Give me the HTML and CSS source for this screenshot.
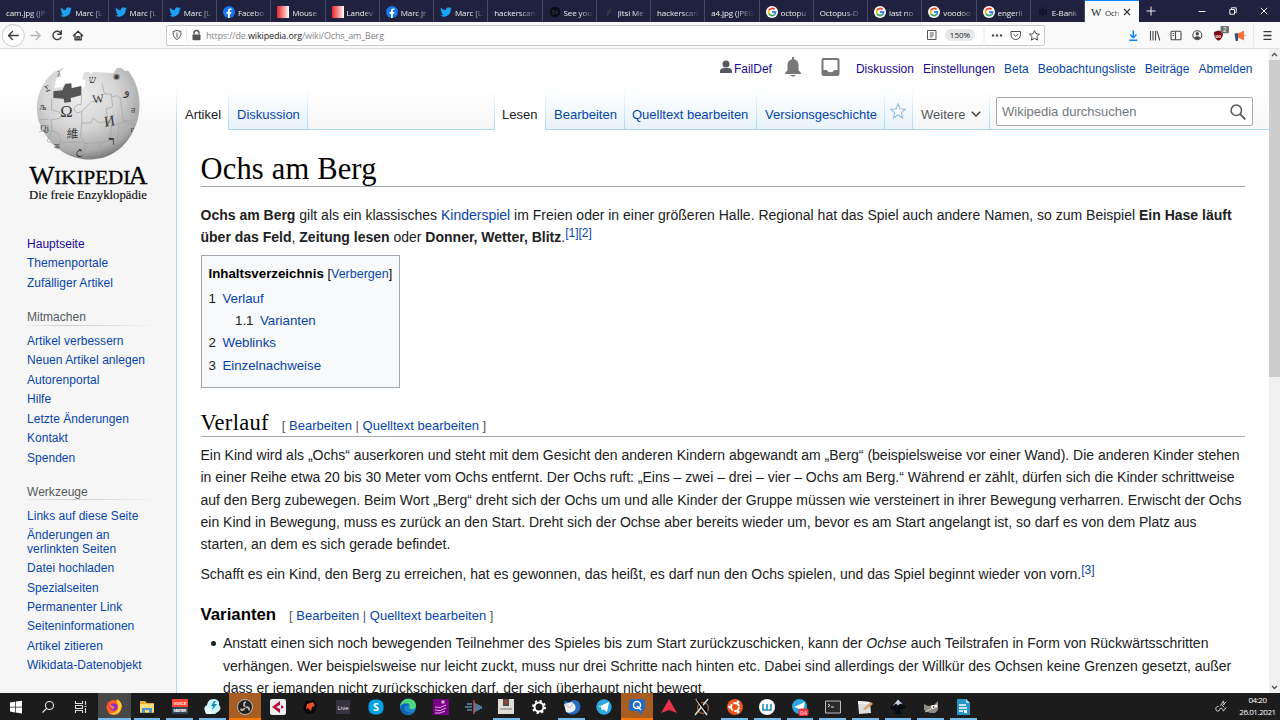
FILE: index.html
```html
<!DOCTYPE html>
<html lang="de">
<head>
<meta charset="utf-8">
<title>Ochs am Berg – Wikipedia</title>
<link rel="stylesheet" href="styles.css">
</head>
<body>
<svg class="defs" width="0" height="0">
  <symbol id="tw" viewBox="0 0 24 24"><path fill="#1da1f2" d="M23.6 4.9c-.8.4-1.7.6-2.7.8 1-.6 1.700-1.500 2-2.600-.9.5-1.900.9-3 1.100a4.700 4.700 0 0 0-8 4.300C8 8.300 4.500 6.400 2.200 3.500a4.700 4.700 0 0 0 1.400 6.300c-.8 0-1.500-.2-2.100-.6 0 2.300 1.600 4.200 3.700 4.700-.7.200-1.400.2-2.100.1.600 1.800 2.300 3.200 4.400 3.200A9.400 9.400 0 0 1 .6 19.100 13.200 13.200 0 0 0 21.200 7.400c.9-.7 1.700-1.500 2.400-2.500z"/></symbol>
  <symbol id="fb" viewBox="0 0 24 24"><circle cx="12" cy="12" r="12" fill="#1778f2"/><path fill="#fff" d="M10 24v-8.500H7V12h3V9.400C10 6.400 11.700 5 14.500 5l2.400.2v3h-1.500c-1.500 0-1.900.8-1.900 1.700V12h3.300l-.5 3.500h-2.800V24z"/></symbol>
  <symbol id="gg" viewBox="0 0 24 24"><circle cx="12" cy="12" r="12" fill="#fff"/><g fill="none" stroke-width="3.600"><path stroke="#ea4335" d="M5.800 8.800A7 7 0 0 1 17 7"/><path stroke="#fbbc05" d="M5.800 8.800a7.500 7.500 0 0 0 0 6.400"/><path stroke="#34a853" d="M5.800 15.200A7 7 0 0 0 16.500 17.500"/><path stroke="#4285f4" d="M16.500 17.500A7 7 0 0 0 19 12h-7"/></g></symbol>
  <symbol id="rd" viewBox="0 0 12 12"><linearGradient id="rg"><stop offset="0" stop-color="#e8232d"/><stop offset=".6" stop-color="#f6a09c"/><stop offset="1" stop-color="#fff"/></linearGradient><path fill="url(#rg)" d="M0 0h12v12H0z"/></symbol>
</svg>
<div class="screen">
<div class="tabstrip">
  <div class="tab"><span>cam.jpg (JP</span></div>
  <div class="tab"><svg><use href="#tw"/></svg><span>Marc [L</span></div>
  <div class="tab"><svg><use href="#tw"/></svg><span>Marc [L</span></div>
  <div class="tab"><svg><use href="#tw"/></svg><span>Marc [L</span></div>
  <div class="tab"><svg><use href="#fb"/></svg><span>Facebo</span></div>
  <div class="tab"><svg><use href="#rd"/></svg><span>Mouse</span></div>
  <div class="tab"><svg><use href="#rd"/></svg><span>Landev</span></div>
  <div class="tab"><svg><use href="#fb"/></svg><span>Marc Jr</span></div>
  <div class="tab"><svg><use href="#tw"/></svg><span>Marc [L</span></div>
  <div class="tab"><span>hackerscan</span></div>
  <div class="tab"><svg viewBox="0 0 12 12"><circle cx="6" cy="6" r="5.300" fill="#090d18"/><path d="M4 9V4l4 4V4" stroke="#30344b" fill="none"/></svg><span>See you</span></div>
  <div class="tab"><svg viewBox="0 0 12 12"><path d="M8 2c1 3-1 5-4 8L4 6z" fill="#303c42"/></svg><span>Jitsi Me</span></div>
  <div class="tab"><span>hackerscan</span></div>
  <div class="tab"><span>a4.jpg (JPEG</span></div>
  <div class="tab"><svg><use href="#gg"/></svg><span>octopu</span></div>
  <div class="tab"><span>Octopus-D</span></div>
  <div class="tab"><svg><use href="#gg"/></svg><span>last no</span></div>
  <div class="tab"><svg><use href="#gg"/></svg><span>voodoo</span></div>
  <div class="tab"><svg><use href="#gg"/></svg><span>engerli</span></div>
  <div class="tab"><svg viewBox="0 0 12 12"><path d="M6 1v10M3 3v6M9 3v6M2 5h8M2 8h8" stroke="#10152a" stroke-width="1.600"/></svg><span>E-Bank</span></div>
  <div class="tab active"><b>W</b><span>Och</span><svg class="x" viewBox="0 0 8 8"><path d="M1 1l6 6M7 1L1 7"/></svg></div>
  <svg class="plus" viewBox="0 0 10 10"><path d="M5 .5v9M.5 5h9"/></svg>
  <div class="winbtns">
    <svg viewBox="0 0 8 8"><path d="M.5 4.500h7"/></svg>
    <svg viewBox="0 0 8 8"><path d="M.8 2.500h4.700v4.700H.8zM2.500 2.500V.8h4.700v4.700H5.500"/></svg>
    <svg viewBox="0 0 8 8"><path d="M.8.8l6.400 6.400M7.200.8L.8 7.200"/></svg>
  </div>
</div>
<div class="toolbar">
  <svg class="nav" viewBox="0 0 90 27"><circle cx="13.300" cy="13.500" r="11" fill="#fff" stroke="#bbb" stroke-width=".8"/><g fill="none" stroke="#3b3b3f" stroke-width="1.400" stroke-linecap="round" stroke-linejoin="round"><path d="M18.200 13.500H8.500m4-4l-4 4 4 4"/><path stroke="#b5b5b8" d="M31 13.500h9m-3.800-4l4 4-4 4"/><path d="M60.800 11.200A4.200 4.200 0 1 0 61 15.200M61.300 8.800v3.400h-3.400"/><path d="M73.500 13.800l4.600-4.500 4.600 4.500M75 13.200v4.600h6.200v-4.600M77 17.600v-2.800h2.200v2.800"/></g></svg>
  <div class="urlbar">
    <svg class="lock" viewBox="0 0 36 19"><path d="M6 5.500l4-1 4 1c0 4-1 6.500-4 8-3-1.500-4-4-4-8zM10 6.500v5" fill="none" stroke="#55555a"/><path d="M19.500 1.500v16" stroke="#ddd" stroke-width=".6"/><rect x="25.500" y="8.500" width="8" height="5.800" rx=".8" fill="#55555a"/><path d="M27 8.500V7a2.500 2.500 0 0 1 5 0v1.500" fill="none" stroke="#55555a" stroke-width="1.300"/></svg>
    <span class="url">https://de.<b>wikipedia.org</b>/wiki/Ochs_am_Berg</span>
    <svg class="reader" viewBox="0 0 12 12"><path d="M1.500 1.500h8.500v9H1.500zM3.800 4h4M3.800 6h4M3.800 8h2.700" fill="none" stroke="#55555a"/></svg>
    <span class="zoom">150%</span>
    <svg class="acts" viewBox="0 0 60 19"><path d="M2 2v15" stroke="#ddd" stroke-width=".7"/><g fill="#4a4a4f"><circle cx="11" cy="9.500" r="1.200"/><circle cx="15" cy="9.500" r="1.200"/><circle cx="19" cy="9.500" r="1.200"/></g><g fill="none" stroke="#4a4a4f" stroke-linejoin="round"><path d="M29 5.500h9.500v3.300a4.750 4.750 0 0 1-9.500 0zM31.300 8l2.450 2.300L36.200 8"/><path d="M52.500 4.600l1.500 3.200 3.500.4-2.600 2.400.7 3.500-3.100-1.700-3.100 1.700.7-3.500-2.600-2.400 3.500-.4z"/></g></svg>
  </div>
  <svg class="ext" viewBox="1120 22 160 27"><g fill="none" stroke="#4a4a4f" stroke-width="1.100"><path stroke="#0a84ff" stroke-width="1.500" d="M1133.300 30.500v7m-3.200-3l3.200 3.200 3.200-3.200M1129.300 40.200h8"/><path d="M1150.500 31v9.500M1153 31v9.500M1155.500 31v9.500M1157 31l2.800 9.500"/><rect x="1171" y="31.300" width="10" height="8.500" rx="1"/><path d="M1175.500 31.300v8.500M1172.600 33.500h1.500M1172.600 35.500h1.500"/><circle cx="1197.300" cy="35.300" r="4.500"/></g><circle cx="1197.300" cy="33.700" r="1.700" fill="#4a4a4f"/><path d="M1194 38c1.500-2.300 5-2.300 6.600 0-1.600 1.800-5 1.800-6.600 0" fill="#4a4a4f"/><path d="M1214 32l4.500-1.500L1223 32c0 4-1 6.800-4.500 8.800-3.500-2-4.500-4.800-4.500-8.800" fill="#800610"/><text x="1215.500" y="37.500" font-size="4.500" font-weight="bold" fill="#fff">uo</text><rect x="1220.500" y="26" width="8.500" height="7.200" rx="1" fill="#707070"/><text x="1223" y="32" font-size="6.500" fill="#fff">2</text><path d="M1234.500 33.500l4-.5v4.500l-.8 3.500h-2z" fill="#345374"/><path d="M1238 33.500l6-3v10l-6-3z" fill="#ff7139"/><path d="M1244 35.500h2" stroke="#ff9a6d"/><path d="M1253.500 23v24" stroke="#e3e3e3" stroke-width=".7"/><path d="M1263.500 31.700h8M1263.500 35.500h8M1263.500 39.300h8" stroke="#38383d" stroke-width="1.300"/></svg>
</div>
<div class="viewport">
<div class="sidebar">
  <svg class="logo" viewBox="0 0 528 480">
    <defs><radialGradient id="globe" cx=".42" cy=".3" r=".72"><stop offset="0" stop-color="#eeeeee"/><stop offset=".5" stop-color="#d5d5d5"/><stop offset=".85" stop-color="#a9a9a9"/><stop offset="1" stop-color="#777"/></radialGradient></defs>
    <g transform="translate(-5 0)">
    <path fill="url(#globe)" d="M197 55c-11 10-19 22-24 36l-6 24 26-5 7-11 17 3-1 13 44-4 1-19-9-4 4-19 14-5 7 7 8-5 60 3 11-15 13-1 11 10 10-1 10 15C438 140 430 225 379 282c-50 56-134 60-191 20C112 247 94 160 143 91c12-18 36-35 54-36z"/>
    <path fill="#555" d="M165 124l27-3 9-19 18-2 1 14 29-6v28l-32 8 1 12-20 2-2-12-31-2z"/>
    <g fill="none" stroke="#a0a0a0" stroke-width="2"><path d="M160 145v35l18 5c16 5 13 22-2 22l-18 2 3 33 18 8 8 18-5 17M250 134l-2 30c-18-4-28 16-12 25l14-4 1 35 27-2 7-14 15 14 30-4 19 10 26-8 30 6M250 220l-3 40 13 21-1 30M311 100l7 31 21 2 4 37-20 7 7 43M340 220l-5 50-26 7-7 41M118 210l33-3M122 245l39-3M161 242l-15 31 42 18M187 277h65M260 280l49-2M387 138l-20 7-10-8-15 3M366 145l9 68 29-3M362 218l-4 61M250 185l30-30 30-3"/></g>
    <g fill="#383838" font-family="Liberation Serif, serif" text-anchor="middle"><text x="204" y="200" font-size="50">Ω</text><text x="300" y="159" font-size="37" transform="rotate(-6 300 150)">W</text><text x="334" y="228" font-size="45" transform="rotate(-8 334 220)">И</text><text x="223" y="265" font-size="35" font-family="Noto Sans CJK TC, sans-serif">維</text><text x="340" y="284" font-size="38" font-weight="bold">ר</text><text x="387" y="136" font-size="35">و</text><text x="354" y="86" font-size="24">◉</text><text x="282" y="99" font-size="31">ש</text><text x="147" y="124" font-size="26" transform="rotate(-20 147 115)">Σ</text><text x="134" y="181" font-size="28">љ</text><text x="139" y="244" font-size="26">Qj</text><text x="244" y="313" font-size="27">උ</text><text x="404" y="190" font-size="23">त</text><text x="182" y="80" font-size="22">λ</text><text x="175" y="297" font-size="22">क</text><text x="402" y="246" font-size="25">г</text></g>
    </g>
    <g font-family="Liberation Serif, serif" fill="#000" stroke="#000" stroke-width=".8"><text x="88" y="401" font-size="73" textLength="76" lengthAdjust="spacingAndGlyphs">W</text><text x="163" y="401" font-size="55" textLength="228" lengthAdjust="spacingAndGlyphs">IKIPEDI</text><text x="386" y="401" font-size="73" textLength="56" lengthAdjust="spacingAndGlyphs">A</text></g><text x="87" y="447" font-family="Liberation Serif, serif" font-size="38" fill="#111" stroke="#111" stroke-width=".5" textLength="354" lengthAdjust="spacingAndGlyphs">Die freie Enzyklopädie</text>
  </svg>
  <nav class="portal first"><a class="seen">Hauptseite</a><a>Themenportale</a><a>Zufälliger Artikel</a></nav>
  <nav class="portal"><h3>Mitmachen</h3><a>Artikel verbessern</a><a>Neuen Artikel anlegen</a><a>Autorenportal</a><a>Hilfe</a><a>Letzte Änderungen</a><a>Kontakt</a><a>Spenden</a></nav>
  <nav class="portal"><h3>Werkzeuge</h3><a>Links auf diese Seite</a><a>Änderungen an<br>verlinkten Seiten</a><a>Datei hochladen</a><a>Spezialseiten</a><a>Permanenter Link</a><a>Seiteninformationen</a><a>Artikel zitieren</a><a>Wikidata-Datenobjekt</a></nav>
</div>
<div class="main">
  <div class="head">
    <div class="personal">
      <svg class="user" viewBox="0 0 12 14"><circle cx="6" cy="4" r="3.500" fill="#54595d"/><path d="M0 13V11c0-2 2-3 4-3h4c2 0 4 1 4 3v2z" fill="#54595d"/></svg><a class="seen">FailDef</a>
      <svg class="bell" viewBox="0 0 16 20"><path d="M7 0h2v2.300c3 .5 4.500 3 4.500 6v5L16 16v1H0v-1l2.500-2.700v-5c0-3 1.500-5.500 4.500-6zM5.500 18h5c-.7 2-4.300 2-5 0z" fill="#777"/></svg>
      <svg class="tray" viewBox="0 0 18 18"><path fill="#777" fill-rule="evenodd" d="M2 0h14q2 0 2 2v14q0 2-2 2H2q-2 0-2-2V2Q0 0 2 0zm0 2v10h3.500c.5 3 6.500 3 7 0H16V2z"/></svg>
      <a class="seen">Diskussion</a><a class="seen">Einstellungen</a><a>Beta</a><a>Beobachtungsliste</a><a>Beiträge</a><a>Abmelden</a>
    </div>
    <div class="tabsrow">
      <div class="vt sel artikel">Artikel</div><div class="vt disk">Diskussion</div>
      <div class="gap"></div>
      <div class="vt sel lesen">Lesen</div><div class="vt bearb">Bearbeiten</div><div class="vt quell">Quelltext bearbeiten</div><div class="vt vers">Versionsgeschichte</div>
      <div class="vt star"><svg viewBox="0 0 16 16"><path d="M8 1l2 5 5.200.3-4 3.300L12.500 15 8 12l-4.500 3 1.300-5.400-4-3.300L6 6z" fill="#fff" stroke="#8cbbdd" stroke-width="1.100"/></svg></div>
      <div class="vt more">Weitere<svg viewBox="0 0 10 6"><path d="M.8.8L5 5 9.200.8" fill="none" stroke="#444" stroke-width="1.500"/></svg></div>
      <div class="search"><span>Wikipedia durchsuchen</span><svg viewBox="0 0 16 16"><circle cx="6.300" cy="6.300" r="5.200" fill="none" stroke="#54595d" stroke-width="1.500"/><path d="M10.200 10.200l5.200 5.200" stroke="#54595d" stroke-width="1.900"/></svg></div>
    </div>
  </div>
  <div class="content">
    <h1>Ochs am Berg</h1>
    <p class="intro"><b>Ochs am Berg</b> gilt als ein klassisches <a>Kinderspiel</a> im Freien oder in einer größeren Halle. Regional hat das Spiel auch andere Namen, so zum Beispiel <b>Ein Hase läuft<br>über das Feld</b>, <b>Zeitung lesen</b> oder <b>Donner, Wetter, Blitz</b>.<sup><a>[1][2]</a></sup></p>
    <div class="toc">
      <div class="toctitle"><b>Inhaltsverzeichnis</b> <span>[<a>Verbergen</a>]</span></div>
      <div class="ti"><i>1</i><a>Verlauf</a></div><div class="ti sub"><i>1.1</i><a>Varianten</a></div><div class="ti"><i>2</i><a>Weblinks</a></div><div class="ti"><i>3</i><a>Einzelnachweise</a></div>
    </div>
    <h2><span>Verlauf</span><small>[ <a>Bearbeiten</a> | <a>Quelltext bearbeiten</a> ]</small></h2>
    <p class="story">Ein Kind wird als „Ochs“ auserkoren und steht mit dem Gesicht den anderen Kindern abgewandt am „Berg“ (beispielsweise vor einer Wand). Die anderen Kinder stehen<br>in einer Reihe etwa 20 bis 30 Meter vom Ochs entfernt. Der Ochs ruft: „Eins – zwei – drei – vier – Ochs am Berg.“ Während er zählt, dürfen sich die Kinder schrittweise<br>auf den Berg zubewegen. Beim Wort „Berg“ dreht sich der Ochs um und alle Kinder der Gruppe müssen wie versteinert in ihrer Bewegung verharren. Erwischt der Ochs<br>ein Kind in Bewegung, muss es zurück an den Start. Dreht sich der Ochse aber bereits wieder um, bevor es am Start angelangt ist, so darf es von dem Platz aus<br>starten, an dem es sich gerade befindet.</p>
    <p class="win">Schafft es ein Kind, den Berg zu erreichen, hat es gewonnen, das heißt, es darf nun den Ochs spielen, und das Spiel beginnt wieder von vorn.<sup><a>[3]</a></sup></p>
    <h3><span>Varianten</span><small>[ <a>Bearbeiten</a> | <a>Quelltext bearbeiten</a> ]</small></h3>
    <div class="list"><div class="dot"></div><div>Anstatt einen sich noch bewegenden Teilnehmer des Spieles bis zum Start zurückzuschicken, kann der <em>Ochse</em> auch Teilstrafen in Form von Rückwärtsschritten<br>verhängen. Wer beispielsweise nur leicht zuckt, muss nur drei Schritte nach hinten etc. Dabei sind allerdings der Willkür des Ochsen keine Grenzen gesetzt, außer<br>dass er jemanden nicht zurückschicken darf, der sich überhaupt nicht bewegt.</div></div>
  </div>
</div>
<div class="scroll"><svg viewBox="0 0 11 11"><path d="M3 7l2.500-2.500L8 7" fill="none" stroke="#505050" stroke-width="1.300"/></svg><div class="thumb"></div><svg viewBox="0 0 11 11"><path d="M3 4l2.500 2.500L8 4" fill="none" stroke="#505050" stroke-width="1.300"/></svg></div>
</div>
<div class="taskbar">
  <div class="s"><svg viewBox="0 0 18 18"><path fill="#fff" d="M3 4.500l5-.8v5H3zM8.700 3.600L15 2.700v6H8.700zM3 9.400h5v5l-5-.8zM8.700 9.400H15v6l-6.300-.9z"/></svg></div>
  <div class="s"><svg viewBox="0 0 18 18"><g fill="none" stroke="#eee" stroke-width="1.100"><circle cx="10.500" cy="7.500" r="4"/><path d="M7.700 10.300L3.500 14.500"/></g></svg></div>
  <div class="s"><svg viewBox="0 0 18 18"><path d="M3.500 3v2.500h7V3M3.500 15v-2.500h7V15M3.500 7.500h7v3h-7zM13.500 3v4M13.500 10v5M12.500 8.500h2" fill="none" stroke="#ddd" stroke-width="1.100"/></svg></div>
  <div class="t on focus"><svg viewBox="0 0 18 18"><circle cx="9" cy="9.500" r="7.500" fill="#ff5d2d"/><path d="M12 1c4 2 6 7 4 10-1 5-8 7-12 4 6 1 10-3 9-8-1-3-2-3-1-6z" fill="#ffcb31"/><path d="M2 3l3 3c3-1 6 0 7 3-2 0-2 3-5 3-3-1-4-4-5-9z" fill="#fc364a"/><circle cx="9" cy="9" r="3.500" fill="#8131ce"/><path d="M3 5l4 3c3 0 3 3 0 3" fill="#ff8b2b"/></svg></div>
  <div class="t on"><svg viewBox="0 0 18 18"><path fill="#e8ad32" d="M2 3h5l2 2h7v10H2z"/><path fill="#ffdc77" d="M2 6h14v8H2z"/><path fill="#4897ce" d="M4 10h10v5h-3v-3H7v3H4z"/></svg></div>
  <div class="t on"><svg viewBox="0 0 18 18"><path fill="#fa4533" d="M1 1h16v8H1z"/><path fill="#344252" d="M1 9h16v7H1z"/><text x="9" y="7" class="lbl" textLength="13">VOICE</text><text x="9" y="14" class="lbl" textLength="13">MEETER</text></svg></div>
  <div class="t on"><svg viewBox="0 0 18 18"><path d="M2 13q-2-4 2-6Q5 1 10 1q7 0 6 6 3 3 0 6l-4 3H4q-2-1-2-3z" fill="#c9f2fb"/><path d="M11 3L8 8h2l-1 4 5-6h-3l2-3z" fill="#168cad"/><path d="M2 11q4-3 7 0v5H3z" fill="#edfbff"/></svg></div>
  <div class="t on orange"><svg viewBox="0 0 18 18"><circle cx="9" cy="9" r="7.500" fill="#222" stroke="#bbb"/><path d="M9 8.500c-2-2-1-4 1-4.500M9.500 9.500c3-1 4 1 3.500 3M8.500 10c-1 3-3 2-4 1" fill="none" stroke="#bbb" stroke-width="1.800"/></svg></div>
  <div class="t"><svg viewBox="0 0 18 18"><rect x="1" y="1" width="16" height="16" rx="2" fill="#eee"/><path d="M11 3v4L7 9l4 2v4L3 9zM12 7l3 2-3 2z" fill="#b90b39"/></svg></div>
  <div class="t"><svg viewBox="0 0 18 18"><path d="M5 3l8-1 3 5-3 8-8 1-3-7z" fill="#080808"/><path d="M6 6l6-2 2 4-3 1-1 4-3-3-2 1z" fill="#ee4d27"/></svg></div>
  <div class="t"><svg viewBox="0 0 18 18"><path fill="#373240" d="M2 2h14v14H2z"/><text x="9" y="11.500" class="live">Live</text></svg></div>
  <div class="t"><svg viewBox="0 0 18 18"><rect x="1.500" y="1.500" width="15" height="15" rx="6" fill="#00a2e5"/><text x="9" y="13" class="big">S</text></svg></div>
  <div class="t"><svg viewBox="0 0 18 18"><circle cx="9" cy="9" r="8" fill="#1686d2"/><path d="M1 8C3-2 17-1 17 8c0 4-5 4-7 2 3-5-4-7-9-2z" fill="#4bd77c"/><path d="M6 8c-3 4 2 8 8 6-7 5-13 0-12-5 1-3 5-4 8-2z" fill="#145aa5"/></svg></div>
  <div class="t"><svg viewBox="0 0 18 18"><path fill="#770084" d="M1 1h16v16H1z"/><circle cx="11" cy="4" r="1.800" fill="#dda6e0"/><path d="M3 9q5 2 11-2M3 12q5 2 11-2M3 15q5 1 10-2" fill="none" stroke="#ddaee0"/></svg></div>
  <div class="t"><svg viewBox="0 0 18 18"><path d="M2 6h5M0 9h7M2 12h5M10 5v9M12 6v7M14 7v5M16 8v3" stroke="#5d86b4" stroke-width="1.700"/><path d="M9 2v14" stroke="#d15c48" stroke-width="1.300"/></svg></div>
  <div class="t on"><svg viewBox="0 0 18 18"><path fill="#e1ddd6" d="M1 1h16v15H1z"/><path fill="#524b49" d="M6 1h6v7H6z"/><path fill="#ba3a32" d="M8 2h2v4H8z"/><path d="M3 11h12" stroke="#aaa" stroke-width="2"/></svg></div>
  <div class="t"><svg viewBox="0 0 18 18"><circle cx="9" cy="9" r="4.500" fill="none" stroke="#fff" stroke-width="2"/><circle cx="9" cy="9" r="6" fill="none" stroke="#fff" stroke-width="2" stroke-dasharray="2.200 2.500"/></svg></div>
  <div class="t on"><svg viewBox="0 0 18 18"><path d="M1 3l6 1C12-1 19 4 17 11c-2 6-10 8-14 2z" fill="#286dc0"/><path d="M1 6l8-2q5 4 3 8-4 4-9 2z" fill="#eee"/><path d="M2 6l5 4 3-5" fill="none" stroke="#b8bbc4"/></svg></div>
  <div class="t"><svg viewBox="0 0 18 18"><circle cx="9" cy="9" r="7.700" fill="#2ba6de"/><path d="M3 9l11-5-2 10-4-3-1 2-1-4z" fill="#fff"/></svg></div>
  <div class="t on orange"><svg viewBox="0 0 18 18"><path d="M3 1h12l2 2v8l-2 2h-1v4l-5-4H3l-2-2V3z" fill="#236ac5"/><circle cx="9" cy="7" r="3.500" fill="none" stroke="#fff" stroke-width="1.500"/><path d="M9 8l4 4" stroke="#fff" stroke-width="1.500"/></svg></div>
  <div class="t"><svg viewBox="0 0 18 18"><path d="M9 1l8 14-8-3-8 3z" fill="#ec314d"/></svg></div>
  <div class="t"><svg viewBox="0 0 18 18"><circle cx="10" cy="10" r="5.500" fill="none" stroke="#9d6340" stroke-width="1.300"/><path d="M3 1l11 16M15 1L2 17" stroke="#ddd" stroke-width="1.500"/><path d="M4 1l10 13" stroke="#000" stroke-width="2"/></svg></div>
  <div class="t on"><svg viewBox="0 0 18 18"><circle cx="9" cy="9" r="8" fill="#e95420"/><circle cx="9" cy="9" r="4" fill="none" stroke="#fff" stroke-width="1.800" stroke-dasharray="7 1.400"/><g fill="#fff"><circle cx="3.500" cy="9" r="1.400"/><circle cx="12" cy="4" r="1.400"/><circle cx="12" cy="14" r="1.400"/></g></svg></div>
  <div class="t on"><svg viewBox="0 0 18 18"><circle cx="9" cy="9" r="8" fill="#fff"/><path d="M5 6v6h8V6M9 6v6" fill="none" stroke="#278fbd" stroke-width="1.600"/></svg></div>
  <div class="t on"><svg viewBox="0 0 18 18"><circle cx="8.500" cy="8.500" r="7.500" fill="#2ba6de"/><path d="M3 9l11-5-2 9-4-2-2-1z" fill="#fff"/><rect x="7.500" y="10.500" width="10" height="7.500" rx="2" fill="#ec3545"/><text x="12.500" y="16.500" class="live">04</text></svg></div>
  <div class="t on"><svg viewBox="0 0 18 18"><path d="M1.500 3h15v12h-15z" fill="#292929" stroke="#bbb"/><path d="M4 6l2 1.500L4 9M7 9h3" stroke="#ddd" fill="none"/></svg></div>
  <div class="t on"><svg viewBox="0 0 18 18"><path d="M2 3l12 1 1 11-12 1z" fill="#ddd"/><path d="M2 3l12 1v2H2z" fill="#f3f3ef"/><path d="M7 11l8-7 2 2-8 6z" fill="#d2a35d"/></svg></div>
  <div class="t on"><svg viewBox="0 0 18 18"><path d="M9 1l8 8q-1 2-4 2l-2 2 2 1-4 3-4-3 2-1-5-2-1-2z" fill="#080b10"/><path d="M9 1.500l5 5-3-1-2 2-2-2-4 3z" fill="#cad4e0"/></svg></div>
  <div class="t on"><svg viewBox="0 0 18 18"><path d="M2 6l4 2 6-1 4-4v9l-3 3H8l-6-3z" fill="#8f8b84"/><circle cx="11" cy="9" r="2" fill="#fff"/><circle cx="14" cy="8" r="1.500" fill="#fff"/><circle cx="11.500" cy="9" r=".8"/><path d="M3 14l6-3" stroke="#ddd"/></svg></div>
  <div class="t on"><svg viewBox="0 0 18 18"><path d="M3 1h9l4 4v12H3z" fill="#2795c8"/><path d="M12 1v4h4" fill="#9edaf4"/><path d="M5 7h7M5 10h8M5 13h4" stroke="#fff" stroke-width="1.300"/><path fill="#fff" d="M10 12h3v3h-3z"/></svg></div>
  <div class="space"></div>
  <svg class="pen" viewBox="0 0 14 14"><path d="M8 6l4-4M7 5l3 3M4 7c-4-1-4 5-1 5s1-4 4-3 0 4 3 2l2-3M6 6L9 1l1 4" fill="none" stroke="#ddd"/></svg>
  <div class="clock">04:20<br>26.01.2021</div>
</div>
</div>
</body>
</html>
```
FILE: styles.css
```css
* { box-sizing: border-box; }
body { margin: 0; font-family: "Liberation Sans", Arial, sans-serif; color: #202122; }
a { color: #0645ad; }
a.seen { color: #1b0a96; }
.defs { position: absolute; }
.screen { width: 1280px; height: 720px; overflow: hidden; display: flex; flex-direction: column; background: #fff; }
.tabstrip { height: 22px; flex: none; display: flex; align-items: center; background: #20213f; color: #eee; font: 8px "Open Sans", sans-serif; letter-spacing: -.1px; }
.tab { width: 54.25px; height: 22px; flex: none; display: flex; align-items: center; border-right: 1px solid #484963; padding: 2px 0 0 6px; white-space: nowrap; }
.tab svg { width: 12px; height: 12px; flex: none; margin-right: 3px; }
.tab span { flex: 1; -webkit-mask-image: linear-gradient(90deg, #000 50%, transparent 92%); mask-image: linear-gradient(90deg, #000 50%, transparent 92%); }
.tab.active { background: #f9f9fa; color: #222; border: 0; border-top: 1.500px solid #0a84ff; padding: 1px 8px 0 6px; }
.tab.active b { font: 11px "Liberation Serif", serif; width: 14px; }
.tab .x { width: 8px; height: 8px; margin: 0; }
.x path { stroke: #333; stroke-width: 1.200; }
.plus { width: 10px; height: 10px; margin-left: 7px; }
.plus path, .winbtns path { stroke: #eee; fill: none; stroke-width: 1; }
.winbtns { margin-left: auto; display: flex; gap: 23px; padding-right: 12px; }
.winbtns svg { width: 8px; height: 8px; }
.toolbar { height: 27px; flex: none; display: flex; align-items: center; background: #f9f9fa; border-bottom: 1px solid #e0e0e2; }
.nav { width: 90px; height: 27px; margin-right: 76px; flex: none; }
.urlbar { width: 879px; height: 21px; flex: none; display: flex; align-items: center; background: #fff; border: 1px solid #ccc; border-radius: 2px; }
.lock { width: 36px; height: 19px; flex: none; }
.url { margin: 1px 0 0 3px; color: #85858a; font: 9px "Open Sans", sans-serif; letter-spacing: -.15px; white-space: nowrap; }
.url b { font-weight: 400; color: #222; }
.reader { width: 12px; height: 12px; margin-left: auto; }
.zoom { width: 30px; height: 12px; margin-left: 7px; border-radius: 6px; background: #e7e7e9; font: 8px/12px "Open Sans", sans-serif; text-align: center; }
.acts { width: 60px; height: 19px; margin: 0 2px 0 7px; }
.ext { width: 160px; height: 27px; margin-left: 75px; flex: none; }
.viewport { height: 644px; flex: none; display: flex; background: #fff; overflow: hidden; }
.sidebar { width: 176px; flex: none; background: linear-gradient(#fff 0, #fff 40px, #f6f6f6 80px); }
.logo { display: block; width: 176px; height: 160px; margin-top: 1px; }
.portal { padding-left: 27px; font-size: 12px; letter-spacing: .03px; }
.portal a { display: block; line-height: 13.500px; margin-bottom: 5.930px; white-space: nowrap; }
.portal.first { padding-top: 28px; }
.portal h3 { margin: 18.700px 19px 9.500px 0; height: 16.500px; font-size: 12px; line-height: 16px; font-weight: 400; color: #54595d; border-bottom: 1px solid; border-image: linear-gradient(90deg, #c8ccd133, #c8ccd1 33%, #c8ccd100) 1; }
.main { width: 1093px; flex: none; border-left: 1px solid; border-image: linear-gradient(#fff 0, #fff 40px, #a7d7f9 80px) 1; }
.head { height: 81px; background: linear-gradient(#fff 0, #fff 40px, #f6f6f6 80px); border-bottom: 1px solid #a7d7f9; }
.personal { height: 40px; display: flex; align-items: center; justify-content: flex-end; padding-right: 16.500px; gap: 9px; font-size: 12px; white-space: nowrap; }
.user { width: 12px; height: 14px; margin: -5px -7px 0 0; }
.bell { width: 16px; height: 20px; margin: -5px 0 0 4px; }
.tray { width: 19px; height: 18px; margin: -5px 7px 0 11px; }
.tabsrow { height: 41px; display: flex; }
.vt { height: 40px; padding: 10px 0 0 8px; font-size: 13px; line-height: 31px; color: #0645ad; border-right: 1px solid; border-image: linear-gradient(#fff, #a7d7f9) 1; background: linear-gradient(#fff, #e8f2f8); white-space: nowrap; flex: none; }
.vt.sel { background: #fff; color: #202122; height: 41px; }
.artikel { width: 52px; } .disk { width: 79px; }
.gap { width: 187px; border-right: 1px solid; border-image: linear-gradient(#fff, #a7d7f9) 1; }
.lesen { width: 51px; padding-left: 7px; } .bearb { width: 79px; } .quell { width: 132px; padding-left: 7px; } .vers { width: 128px; }
.star { width: 28px; padding: 14px 0 0 5px; } .star svg { display: block; width: 16px; height: 16px; }
.more { width: 77px; color: #54595d; background: none; } .more svg { width: 10px; height: 6px; margin: 0 0 2px 5px; }
.search { width: 257px; height: 29px; margin: 8px 0 0 6px; display: flex; align-items: center; justify-content: space-between; padding: 0 6px 0 5px; border: 1px solid #a2a9b1; border-radius: 2px; background: #fff; color: #72777d; font-size: 13px; }
.search svg { width: 16px; height: 16px; }
.content { padding: 20px 24px 0 23.500px; font-size: 14px; line-height: 22.400px; white-space: nowrap; }
h1 { margin: 0; height: 37px; border-bottom: 1px solid #a2a9b1; font: 400 30.500px/38px "Liberation Serif", serif; letter-spacing: .18px; color: #000; }
p { margin: 0; }
.intro { padding-top: 17px; }
sup { font-size: 12px; line-height: 1; vertical-align: 5px; }
.toc { width: 199px; height: 133px; margin-top: 6px; padding: 6.500px 7px; border: 1px solid #a2a9b1; background: #f8f9fa; font-size: 13.300px; }
.toctitle { line-height: 23px; margin-bottom: 1.500px; color: #000; } .toctitle span { font-size: 12.500px; }
.ti { line-height: 22.300px; display: flex; gap: 6.500px; } .ti i { font-style: normal; } .sub { padding-left: 26.500px; }
.ti a { letter-spacing: -.03px; }
h2 { margin: 18px 0 0; height: 31px; display: flex; align-items: baseline; border-bottom: 1px solid #a2a9b1; font: 400 22.500px/33px "Liberation Serif", serif; color: #000; }
h2 span { letter-spacing: .3px; }
h2 small, h3 small { font: 13px "Liberation Sans", sans-serif; color: #54595d; margin-left: 13px; }
.story { padding-top: 7px; }
.win { margin-top: 7px; }
.content h3 { margin: 18px 0 0; font-size: 16.800px; line-height: 24px; color: #000; }
.list { margin-top: 5px; display: flex; }
.dot { width: 5px; height: 5px; margin: 9px 7.500px 0 10px; border-radius: 50%; background: #202122; flex: none; }
.scroll { width: 11px; flex: none; display: flex; flex-direction: column; background: #f0f0f0; }
.scroll svg { width: 11px; height: 11px; flex: none; }
.thumb { height: 317px; margin-bottom: auto; background: #cdcdcd; }
.taskbar { height: 27px; flex: none; display: flex; background: #1c1c1c; }
.s { width: 32px; } .s:nth-child(3) { width: 34px; }
.t { width: 32.670px; position: relative; }
.s, .t { flex: none; display: flex; justify-content: center; align-items: center; }
.s svg, .t svg { width: 18px; height: 18px; }
.on::after { content: ""; position: absolute; left: 3px; right: 3px; bottom: 0; height: 2px; background: #76b9ed; }
.focus { background: #484848; } .focus::after, .orange::after { left: 0; right: 0; }
.orange { background: #a85e22; } .orange::after { background: #ff7900; }
.lbl { font: bold 4px "Liberation Sans", sans-serif; fill: #fff; text-anchor: middle; }
.live { font: 6px "Open Sans", sans-serif; fill: #eee; text-anchor: middle; }
.big { font: bold 11px "Open Sans", sans-serif; fill: #fff; text-anchor: middle; }
.space { flex: 1; }
.pen { width: 13px; height: 13px; margin: 7px 9px 0 0; }
.clock { width: 41px; margin-right: 2px; color: #fff; font: 8px/12px "Open Sans", sans-serif; text-align: center; padding-top: 1px; letter-spacing: -.45px; }
```
